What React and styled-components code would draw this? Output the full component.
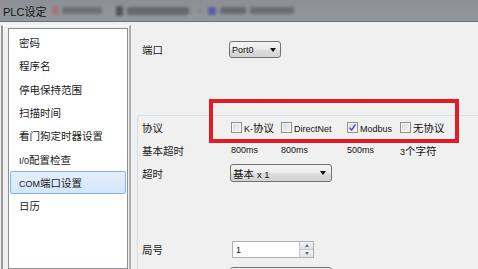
import React from "react";
import styled, { createGlobalStyle } from "styled-components";

const Global = createGlobalStyle`
  html, body { margin: 0; padding: 0; background: #f0f0f0; }
  body {
    width: 478px; height: 269px; overflow: hidden;
    font-family: "Liberation Sans", "Noto Sans CJK SC", sans-serif;
    color: #111;
  }
`;

const Frame = styled.div`
  position: relative;
  width: 478px;
  height: 269px;
  overflow: hidden;
  background: #f0f0f0;
`;

const TitleBar = styled.div`
  height: 21px;
  display: flex;
  align-items: center;
  padding-left: 3px;
  background: linear-gradient(#8c9095, #94989d);
  border-bottom: 1px solid #6e7277;
  overflow: hidden;
`;

const Title = styled.span`
  font-size: 11px;
  color: #141414;
  white-space: nowrap;
`;

const Smudge = styled.span`
  flex: none;
  display: inline-block;
  margin-left: ${(p) => p.$ml}px;
  width: ${(p) => p.$w}px;
  height: ${(p) => p.$h || 6}px;
  background: ${(p) => p.$c};
  filter: blur(1.8px);
  border-radius: 2px;
  opacity: ${(p) => p.$o || 0.55};
`;

const Body = styled.div`
  display: flex;
  height: 247px;
`;

const Sidebar = styled.aside`
  flex: none;
  width: 120px;
  margin: 3px 0 0 1px;
  padding: 2px 1px 0 5px;
  border-left: 2px solid #9a9a9a;
  border-right: 2px solid #b0b0b0;
  border-top: 1px solid #fafafa;
  display: flex;
`;

const ListBox = styled.ul`
  list-style: none;
  margin: 0;
  width: 120px;
  box-sizing: border-box;
  border: 1px solid #8d9197;
  background: #fff;
  padding: 2px 1px;
`;

const Item = styled.li`
  height: 23.33px;
  box-sizing: border-box;
  display: flex;
  align-items: center;
  padding-left: 8px;
  border: 1px solid ${(p) => (p.$sel ? "#86b1e4" : "transparent")};
  border-radius: 2px;
  background: ${(p) => (p.$sel ? "linear-gradient(#e2eefc, #d6e7fb)" : "transparent")};
  font-size: 10.5px;
  white-space: nowrap;
  color: #1a1a1a;
`;

const Lat = styled.span`
  font-family: "Liberation Sans", sans-serif;
  font-size: ${(p) => p.$fs || 9}px;
`;

const Content = styled.main`
  flex: 1;
  display: flex;
  flex-direction: column;
  min-width: 0;
`;

const Row = styled.div`
  display: flex;
  align-items: center;
  height: ${(p) => p.$h}px;
  margin-top: ${(p) => p.$mt || 0}px;
  padding-left: ${(p) => p.$pl || 0}px;
  flex: none;
`;

const Label = styled.span`
  flex: none;
  width: ${(p) => p.$w}px;
  font-size: 10.5px;
  white-space: nowrap;
  color: #1a1a1a;
`;

const Combo = styled.div`
  flex: none;
  box-sizing: border-box;
  width: ${(p) => p.$w}px;
  height: ${(p) => p.$h}px;
  display: flex;
  align-items: center;
  justify-content: space-between;
  padding: 0 ${(p) => p.$pr || 4}px 0 2px;
  border: 1px solid #737373;
  border-radius: 3px;
  background: linear-gradient(#f4f4f4 0%, #ececec 48%, #dedede 52%, #d2d2d2 100%);
  font-size: 10.5px;
  white-space: nowrap;
`;

const Arrow = styled.span`
  width: 0;
  height: 0;
  border-left: 3.5px solid transparent;
  border-right: 3.5px solid transparent;
  border-top: 4px solid #111;
`;

const GroupBox = styled.section`
  margin: 57px 0 0 6px;
  border-top: 1px solid #d6dee4;
  border-left: 1px solid #d6dee4;
  border-top-left-radius: 3px;
  padding-left: 4px;
  display: flex;
  flex-direction: column;
  flex: 1;
`;

const Cols = styled.div`
  display: grid;
  grid-template-columns: 50px 66px 53px auto;
  align-items: center;
  padding-left: 1px;
  font-size: 10.5px;
  white-space: nowrap;
`;

const CheckItem = styled.label`
  display: flex;
  align-items: center;
  gap: 2px;
  font-size: 10.5px;
  white-space: nowrap;
`;

const Box = styled.span`
  flex: none;
  width: 11px;
  height: 11px;
  box-sizing: border-box;
  border: 1px solid #8e8f90;
  box-shadow: inset 0 0 0 1px #f6f6f6;
  background: linear-gradient(135deg, #d4d7db, #f7f7f7);
  display: flex;
  align-items: center;
  justify-content: center;
`;

const Spin = styled.div`
  flex: none;
  margin-left: 2px;
  width: 82px;
  height: 17px;
  box-sizing: border-box;
  border: 1px solid #adb0b5;
  background: #fff;
  display: flex;
  align-items: stretch;
`;

const SpinText = styled.span`
  flex: 1;
  display: flex;
  align-items: center;
  padding-left: 3px;
`;

const SpinBtns = styled.span`
  flex: none;
  width: 13px;
  display: flex;
  flex-direction: column;
  border-left: 1px solid #c3c5c9;
`;

const SpinBtn = styled.span`
  flex: 1;
  display: flex;
  align-items: center;
  justify-content: center;
  background: linear-gradient(#f3f4f6, #dfe2e6);
  border-bottom: ${(p) => (p.$top ? "1px solid #c3c5c9" : "none")};
`;

const Tri = styled.span`
  width: 0;
  height: 0;
  border-left: 2.5px solid transparent;
  border-right: 2.5px solid transparent;
  ${(p) => (p.$up ? "border-bottom: 3px solid #5a6f93;" : "border-top: 3px solid #5a6f93;")}
`;

const Highlight = styled.div`
  position: absolute;
  left: 209px;
  top: 99px;
  width: 250px;
  height: 44px;
  box-sizing: border-box;
  border: 4px solid #e31b25;
  pointer-events: none;
`;

const items = ["密码", "程序名", "停电保持范围", "扫描时间", "看门狗定时器设置", "I/0配置检查", "COM端口设置", "日历"];

function Mixed({ text }) {
  const parts = text.split(/([A-Za-z0-9/]+-?)/).filter(Boolean);
  return (
    <span>
      {parts.map((p, i) =>
        /^[A-Za-z0-9/]+-?$/.test(p) ? <Lat key={i}>{p}</Lat> : <React.Fragment key={i}>{p}</React.Fragment>
      )}
    </span>
  );
}

function Check({ checked, children }) {
  return (
    <CheckItem>
      <Box>
        {checked && (
          <svg width="9" height="9" viewBox="0 0 9 9">
            <path d="M1.5 4.6 L3.6 7 L7.6 1.3" fill="none" stroke="#42579c" strokeWidth="1.4" />
          </svg>
        )}
      </Box>
      <Mixed text={children} />
    </CheckItem>
  );
}

export default function App() {
  return (
    <Frame>
      <Global />
      <TitleBar>
        <Title>
          <Lat $fs={11}>PLC</Lat>设定
        </Title>
        <Smudge $ml={6} $w={7} $h={9} $c="#b4606c" $o={0.6} />
        <Smudge $ml={3} $w={40} $h={7} $c="#44474c" $o={0.45} />
        <Smudge $ml={14} $w={7} $h={10} $c="#2e3136" $o={0.65} />
        <Smudge $ml={4} $w={62} $h={8} $c="#3b3e43" $o={0.5} />
        <Smudge $ml={10} $w={3} $h={2} $c="#3b3e43" $o={0.5} />
        <Smudge $ml={6} $w={8} $h={8} $c="#3b3fb0" $o={0.65} />
        <Smudge $ml={4} $w={26} $h={7} $c="#3b3e43" $o={0.5} />
        <Smudge $ml={4} $w={44} $h={7} $c="#3b3e43" $o={0.45} />
      </TitleBar>
      <Body>
        <Sidebar>
          <ListBox>
            {items.map((t, i) => (
              <Item key={t} $sel={i === 6}>
                <Mixed text={t} />
              </Item>
            ))}
          </ListBox>
        </Sidebar>
        <Content>
          <Row $h={17} $mt={19} $pl={11}>
            <Label $w={87}>端口</Label>
            <Combo $w={52} $h={17}>
              <Lat>Port0</Lat>
              <Arrow />
            </Combo>
          </Row>
          <GroupBox>
            <Row $h={23}>
              <Label $w={88}>协议</Label>
              <Cols>
                <Check>K-协议</Check>
                <Check>DirectNet</Check>
                <Check checked>Modbus</Check>
                <Check>无协议</Check>
              </Cols>
            </Row>
            <Row $h={22}>
              <Label $w={88}>基本超时</Label>
              <Cols>
                <Lat>800ms</Lat>
                <Lat>800ms</Lat>
                <Lat>500ms</Lat>
                <span>
                  <Lat>3</Lat>个字符
                </span>
              </Cols>
            </Row>
            <Row $h={24}>
              <Label $w={88}>超时</Label>
              <Combo $w={102} $h={18} $pr={5}>
                <span>
                  基本 <Lat $fs={9.5}>x 1</Lat>
                </span>
                <Arrow />
              </Combo>
            </Row>
            <Row $h={21} $mt={54}>
              <Label $w={88}>局号</Label>
              <Spin>
                <SpinText>
                  <Lat>1</Lat>
                </SpinText>
                <SpinBtns>
                  <SpinBtn $top>
                    <Tri $up />
                  </SpinBtn>
                  <SpinBtn>
                    <Tri />
                  </SpinBtn>
                </SpinBtns>
              </Spin>
            </Row>
            <Row $h={18} $mt={7}>
              <Label $w={88} />
              <Combo $w={102} $h={18} />
            </Row>
          </GroupBox>
        </Content>
      </Body>
      <Highlight />
    </Frame>
  );
}
